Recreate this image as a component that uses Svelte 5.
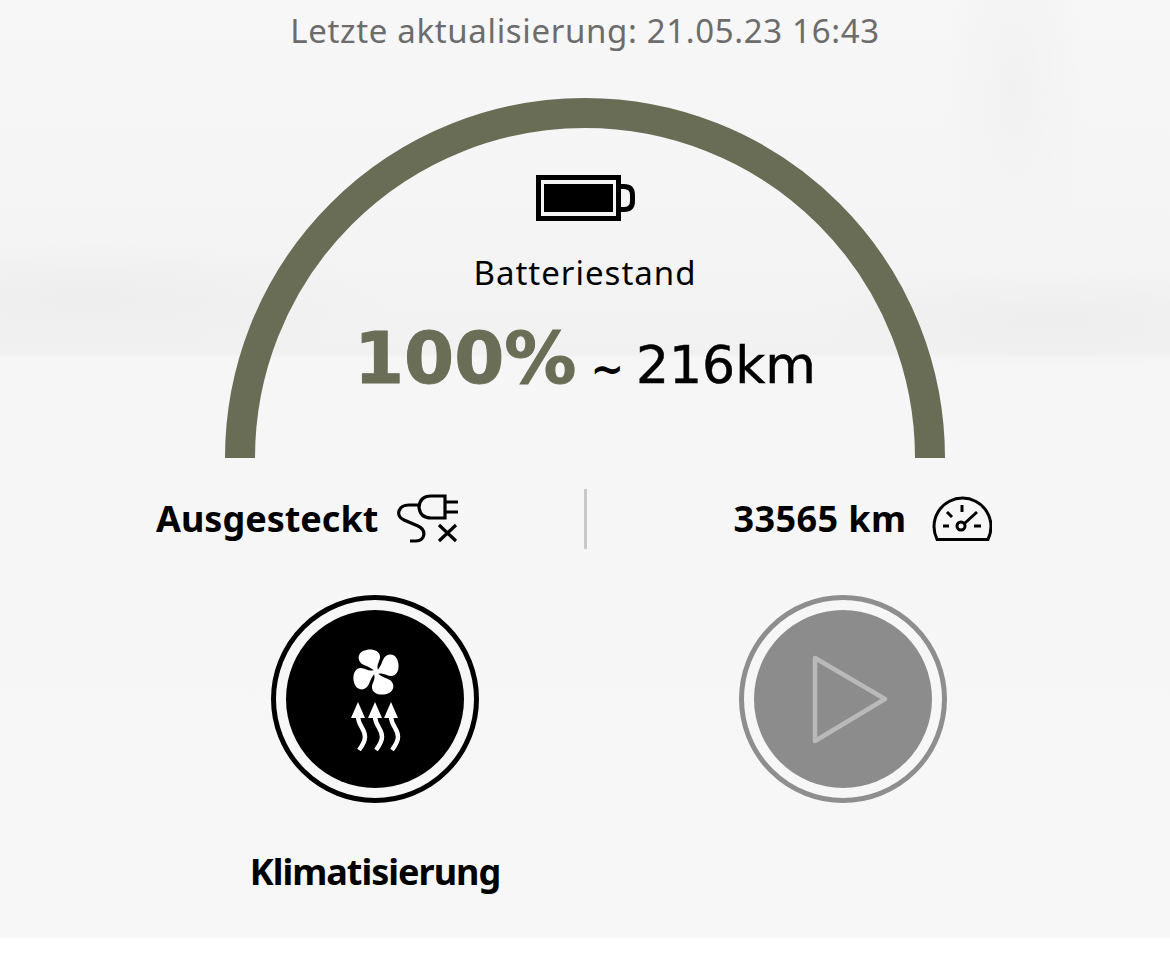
<script>
	const updated = '21.05.23 16:43';
	const mileage = 33565;
	const arrowXs = [-17, 0, 16];
	const blades = [0, 90, 180, 270];
</script>

<main class="panel">
	<p class="updated">Letzte aktualisierung: {updated}</p>

	<section class="gauge">
		<svg class="arc" width="720" height="360" viewBox="0 0 720 360" aria-hidden="true">
			<path d="M15 360 A345 345 0 0 1 705 360" fill="none" stroke="#696d56" stroke-width="30" />
		</svg>
		<div class="gauge-content">
			<svg class="battery" width="100" height="46" viewBox="0 0 100 46" aria-hidden="true">
				<rect x="2.5" y="2.5" width="80" height="41" fill="none" stroke="#000" stroke-width="5" />
				<rect x="8" y="9" width="69" height="28" fill="#000" />
				<path d="M84 11.5 H88 Q96.5 11.5 96.5 20 V26 Q96.5 34.5 88 34.5 H84" fill="none" stroke="#000" stroke-width="5" />
			</svg>
			<div class="gauge-label">Batteriestand</div>
			<div class="reading">
				<span class="percent">100%</span>
				<span class="tilde">~</span>
				<span class="range">216km</span>
			</div>
		</div>
	</section>

	<section class="status">
		<div class="status-cell left">
			<span>Ausgesteckt</span>
			<svg width="64" height="54" viewBox="16 12 64 54" aria-hidden="true">
				<g fill="none" stroke="#000" stroke-width="3.2">
					<path d="M65 16 H51 Q40 16 39 27 Q40 38 51 38 H65 Z" />
					<path d="M65 22 H78 M65 32 H78" />
					<path d="M39 25 H29 C18 25 15 36 24 40 L38 46 C47 50 45 61 36 61 H30" />
					<path d="M59 45 L76 61 M76 45 L59 61" />
				</g>
			</svg>
		</div>
		<div class="divider"></div>
		<div class="status-cell right">
			<span>{mileage} km</span>
			<svg width="60" height="46" viewBox="13 12 60 46" aria-hidden="true">
				<g fill="none" stroke="#000" stroke-width="3">
					<path d="M18.1 55.5 A28.5 28.5 0 1 1 68.9 55.5 Z" />
					<path d="M24 42 H30 M55 42 H62 M28 28 L33 33 M43 21 V28 M46 39 L58 28" />
					<circle cx="42" cy="42" r="4" />
				</g>
			</svg>
		</div>
	</section>

	<section class="actions">
		<div class="action">
			<button class="round dark" type="button" aria-label="Klimatisierung">
				<svg width="178" height="178" viewBox="-89 -89 178 178" aria-hidden="true">
					<g transform="translate(1 -27)">
						{#each blades as angle}
							<path
								transform="rotate({angle})"
								d="M1 2 C-2 -3 -7 -5 -12 -7 C-19 -10 -19 -18 -13 -21 C-7 -24 3 -23 4 -16 C4.5 -11 0 -8 2 -2 Z"
								fill="#fff"
							/>
						{/each}
					</g>
					{#each arrowXs as x}
						<g transform="translate({x} 3)">
							<path d="M0 0 L7 16 H-7 Z" fill="#fff" />
							<path d="M0 14 C0 24 7 26 7 35 C7 40 4 44 1 48" fill="none" stroke="#fff" stroke-width="4.5" />
						</g>
					{/each}
				</svg>
			</button>
			<span class="action-label">Klimatisierung</span>
		</div>
		<div class="action">
			<button class="round disabled" type="button" aria-label="Start" disabled>
				<svg width="178" height="178" viewBox="-89 -89 178 178" aria-hidden="true">
					<path d="M-28 -41 L42 0 L-28 42 Z" fill="none" stroke="#b9b9b9" stroke-width="4.5" stroke-linejoin="round" />
				</svg>
			</button>
		</div>
	</section>
</main>

<style>
	:global(body) {
		background: #fff;
	}

	.panel {
		height: 938px;
		box-sizing: border-box;
		padding-top: 9px;
		overflow: hidden;
		font-family: "Noto Sans", sans-serif;
		background:
			radial-gradient(ellipse 70px 190px at 1015px 90px, #f1f1f1, transparent),
			radial-gradient(ellipse 300px 60px at 90px 300px, #eeeeee, transparent),
			radial-gradient(ellipse 240px 50px at 1050px 320px, #eeeeee, transparent),
			linear-gradient(180deg, #f7f7f7 0, #f5f5f5 200px, #f1f1f1 354px, #f6f6f6 358px, #f7f7f8 100%);
	}

	.updated {
		margin: 0;
		height: 44px;
		line-height: 44px;
		text-align: center;
		font-size: 33px;
		letter-spacing: 0.65px;
		color: #6c6c6c;
	}

	.gauge {
		display: grid;
		justify-items: center;
		margin-top: 45px;
	}

	.arc,
	.gauge-content {
		grid-area: 1 / 1;
	}

	.gauge-content {
		display: flex;
		flex-direction: column;
		align-items: center;
		padding-top: 77px;
	}

	.battery {
		margin-left: 2px;
	}

	.gauge-label {
		margin-top: 30px;
		font-size: 33px;
		letter-spacing: 1px;
		line-height: 44px;
		color: #000;
	}

	.reading {
		display: flex;
		align-items: baseline;
		font-family: "DejaVu Sans", sans-serif;
		margin-top: 21px;
	}

	.percent {
		font-size: 72px;
		font-weight: 700;
		-webkit-text-stroke: 1px #6a6e56;
		color: #6a6e56;
	}

	.tilde {
		font-size: 40px;
		font-weight: 700;
		margin: 0 12px 0 14px;
		color: #000;
	}

	.range {
		font-size: 52px;
		-webkit-text-stroke: 0.5px #000;
		color: #000;
	}

	.status {
		display: grid;
		grid-template-columns: 1fr 3px 1fr;
		align-items: center;
		height: 60px;
		margin-top: 31px;
	}

	.status-cell {
		display: flex;
		align-items: center;
		font-size: 36px;
		font-weight: 700;
		color: #000;
	}

	.status-cell span {
		padding-bottom: 2px;
	}

	.left {
		gap: 18px;
		padding-left: 156px;
	}

	.right {
		gap: 26px;
		padding-left: 147px;
		letter-spacing: 0.4px;
	}

	.divider {
		height: 60px;
		background: #c8c8c8;
	}

	.actions {
		display: grid;
		grid-template-columns: 250px 250px;
		column-gap: 218px;
		padding-left: 250px;
		margin-top: 46px;
	}

	.action {
		display: flex;
		flex-direction: column;
		align-items: center;
	}

	.round {
		width: 208px;
		height: 208px;
		box-sizing: border-box;
		padding: 10px;
		border-radius: 50%;
		border: 5px solid;
		display: block;
		background: transparent;
	}

	.round svg {
		display: block;
		border-radius: 50%;
	}

	.dark {
		border-color: #000;
	}

	.dark svg {
		background: #000;
	}

	.disabled {
		border-color: #8e8e8e;
	}

	.disabled svg {
		background: #8c8c8c;
	}

	.action-label {
		margin-top: 44px;
		font-size: 36px;
		line-height: 50px;
		font-weight: 700;
		letter-spacing: -1px;
		color: #000;
	}
</style>
